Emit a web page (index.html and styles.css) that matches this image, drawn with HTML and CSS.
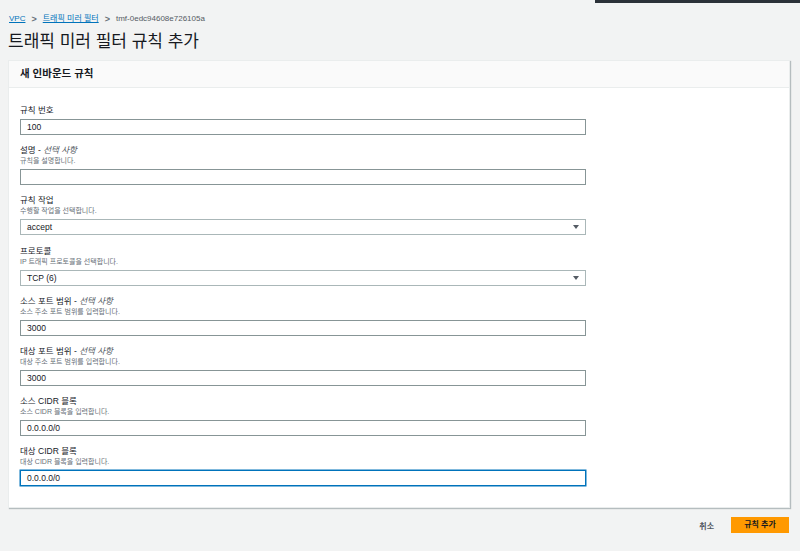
FILE: index.html
```html
<!DOCTYPE html>
<html lang="ko">
<head>
<meta charset="utf-8">
<link rel="stylesheet" href="styles.css">
</head>
<body>
<div class="topbar"><div class="topbar-strip"></div></div>
<nav class="crumbs">
  <a class="crumb-link">VPC</a>
  <span class="sep">&gt;</span>
  <a class="crumb-link">트래픽 미러 필터</a>
  <span class="sep">&gt;</span>
  <span class="crumb-cur">tmf-0edc94608e726105a</span>
</nav>
<h1 class="title">트래픽 미러 필터 규칙 추가</h1>
<section class="panel">
  <header class="panel-head">새 인바운드 규칙</header>
  <div class="panel-body">
    <div class="field nodesc">
      <div class="label">규칙 번호</div>
      <div class="input">100</div>
    </div>
    <div class="field">
      <div class="label">설명 - <i>선택 사항</i></div>
      <div class="desc">규칙을 설명합니다.</div>
      <div class="input"></div>
    </div>
    <div class="field">
      <div class="label">규칙 작업</div>
      <div class="desc">수행할 작업을 선택합니다.</div>
      <div class="input select">accept<span class="arrow"></span></div>
    </div>
    <div class="field">
      <div class="label">프로토콜</div>
      <div class="desc">IP 트래픽 프로토콜을 선택합니다.</div>
      <div class="input select">TCP (6)<span class="arrow"></span></div>
    </div>
    <div class="field">
      <div class="label">소스 포트 범위 - <i>선택 사항</i></div>
      <div class="desc">소스 주소 포트 범위를 입력합니다.</div>
      <div class="input">3000</div>
    </div>
    <div class="field">
      <div class="label">대상 포트 범위 - <i>선택 사항</i></div>
      <div class="desc">대상 주소 포트 범위를 입력합니다.</div>
      <div class="input">3000</div>
    </div>
    <div class="field">
      <div class="label">소스 CIDR 블록</div>
      <div class="desc">소스 CIDR 블록을 입력합니다.</div>
      <div class="input">0.0.0.0/0</div>
    </div>
    <div class="field">
      <div class="label">대상 CIDR 블록</div>
      <div class="desc">대상 CIDR 블록을 입력합니다.</div>
      <div class="input focus">0.0.0.0/0</div>
    </div>
  </div>
</section>
<div class="actions">
  <span class="cancel">취소</span>
  <span class="primary">규칙 추가</span>
</div>
</body>
</html>
```

FILE: styles.css
```css
html, body {
  margin: 0;
  padding: 0;
  background: #f2f3f3;
}
body {
  font-family: "Liberation Sans", "Noto Sans CJK KR", sans-serif;
  color: #16191f;
  padding: 0 10px 0 8px;
  height: 551px;
  box-sizing: border-box;
}
.topbar {
  display: flex;
  justify-content: flex-end;
  margin-right: -10px;
  height: 3px;
}
.topbar-strip {
  width: 205px;
  height: 3px;
  background: #2b3138;
}
.crumbs {
  display: flex;
  align-items: center;
  gap: 5px;
  font-size: 8px;
  line-height: 12px;
  margin-top: 10px;
  padding-left: 1px;
}
.crumb-link {
  color: #0073bb;
  text-decoration: underline;
}
.sep {
  color: #687078;
  font-weight: bold;
  font-size: 9px;
  margin: 0 1px;
}
.crumb-cur {
  color: #545b64;
}
.title {
  font-size: 17px;
  font-weight: normal;
  line-height: 24px;
  margin: 5px 0 6px 0;
  color: #16191f;
}
.panel {
  background: #fff;
  border: 1px solid #eaeded;
  box-shadow: 1px 1px 1px rgba(0,28,36,0.25);
}
.panel-head {
  height: 26px;
  line-height: 25px;
  background: #fafafa;
  border-bottom: 1px solid #eaeded;
  padding-left: 11px;
  font-size: 10.5px;
  font-weight: bold;
}
.panel-body {
  padding: 16px 11px 21px 11px;
  display: flex;
  flex-direction: column;
  gap: 9px;
}
.field {
  width: 566px;
}
.label {
  font-size: 8.5px;
  line-height: 12px;
  color: #16191f;
}
.label i {
  color: #545b64;
}
.nodesc .label {
  margin-bottom: 0;
}
.desc {
  font-size: 7px;
  line-height: 10px;
  color: #687078;
}
.input {
  margin-top: 3px;
  height: 16px;
  box-sizing: border-box;
  border: 1px solid #879596;
  padding-left: 6px;
  font-size: 8.5px;
  line-height: 14px;
  color: #16191f;
  position: relative;
}
.field + .field .input {
  margin-top: 3px;
}
.field + .field {
  margin-top: 0.2px;
}
.select {
  border-color: #aab7b8;
}
.arrow {
  position: absolute;
  right: 6px;
  top: 5px;
  width: 0;
  height: 0;
  border-left: 3px solid transparent;
  border-right: 3px solid transparent;
  border-top: 4px solid #545b64;
}
.focus {
  border-color: #0073bb;
  box-shadow: 0 0 0 0.5px #0073bb;
}
.actions {
  display: flex;
  justify-content: flex-end;
  align-items: center;
  gap: 17px;
  margin-top: 9px;
  margin-right: 1px;
}
.cancel {
  font-size: 8px;
  font-weight: bold;
  color: #545b64;
}
.primary {
  width: 58px;
  height: 16px;
  line-height: 16px;
  text-align: center;
  background: #ff9900;
  border: none;
  font-size: 8px;
  font-weight: bold;
  color: #16191f;
}
```
